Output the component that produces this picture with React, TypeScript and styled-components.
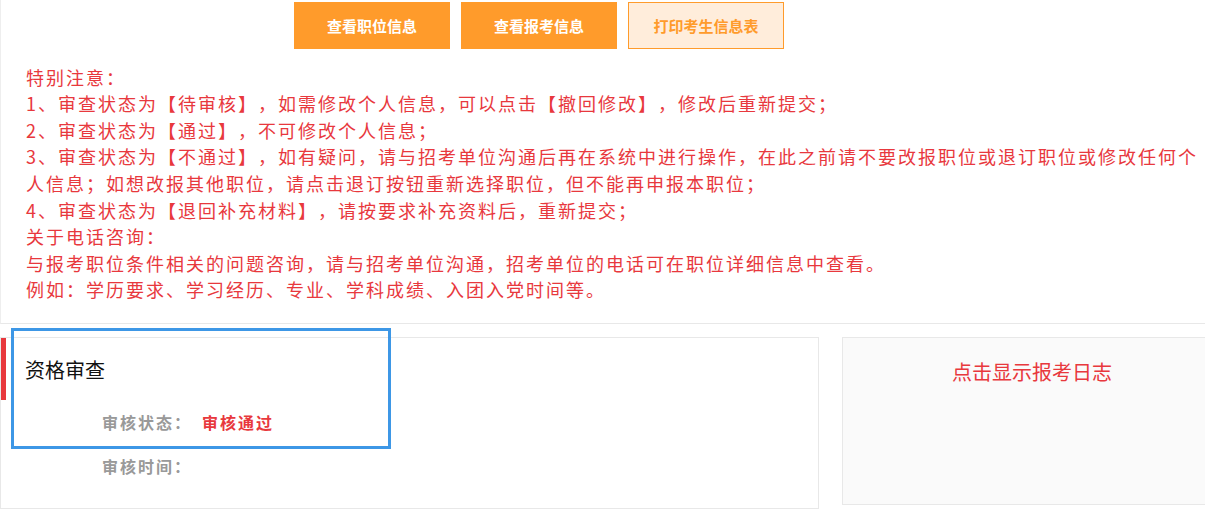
import styled, { createGlobalStyle } from "styled-components";

const GlobalStyle = createGlobalStyle`
  html, body {
    margin: 0;
    padding: 0;
    background: #ffffff;
    overflow: hidden;
  }
  body {
    font-family: "Noto Sans CJK SC", "Liberation Sans", sans-serif;
    text-spacing-trim: space-all;
    font-feature-settings: "palt" 0, "halt" 0;
  }
`;

const RED = "#e8383d";
const ORANGE = "#ff9b2b";
const LINE = "#e8e8e8";

const TopSection = styled.section`
  border-left: 1px solid #eeeeee;
  border-bottom: 1px solid ${LINE};
  padding-bottom: 20px;
`;

const ButtonBar = styled.div`
  display: flex;
  gap: 11px;
  padding: 2px 0 0 293px;
`;

const ActionButton = styled.button<{ $outline?: boolean }>`
  width: 156px;
  height: 47px;
  box-sizing: border-box;
  border: 1px solid ${ORANGE};
  background: ${(p) => (p.$outline ? "#ffeddb" : ORANGE)};
  color: ${(p) => (p.$outline ? ORANGE : "#ffffff")};
  font-family: inherit;
  font-size: 15px;
  font-weight: 700;
  cursor: pointer;
  padding: 0;
`;

const Notes = styled.div`
  margin-top: 14.7px;
  padding-left: 25px;
  color: ${RED};
  font-size: 18px;
  letter-spacing: 2px;
  line-height: 26.6px;
`;

const NoteLine = styled.div``;

const LowerSection = styled.section`
  position: relative;
  display: flex;
  gap: 23px;
  padding-top: 13px;
`;

const ReviewPanel = styled.div`
  width: 819px;
  height: 172px;
  box-sizing: border-box;
  border: 1px solid ${LINE};
  flex-shrink: 0;
`;

const PanelHeader = styled.div`
  height: 62px;
  display: flex;
  align-items: center;
  border-left: 5px solid ${RED};
  padding-left: 19px;
  font-size: 20px;
  color: #111111;
`;

const InfoRow = styled.div`
  display: flex;
  align-items: center;
  height: 44px;
  padding-left: 101px;
  font-size: 16px;
  font-weight: 700;
  letter-spacing: 2px;
`;

const InfoLabel = styled.span`
  width: 100px;
  color: #999999;
`;

const InfoValue = styled.span<{ $tone?: "red" }>`
  color: ${(p) => (p.$tone === "red" ? RED : "#333333")};
`;

const LogPanel = styled.div`
  width: 380px;
  height: 168px;
  box-sizing: border-box;
  flex-shrink: 0;
  border: 1px solid ${LINE};
  background: #fafafa;
  padding-top: 21px;
  text-align: center;
  color: ${RED};
  font-size: 20px;
  line-height: 26px;
  cursor: pointer;
`;

const FocusFrame = styled.div`
  position: absolute;
  left: 11px;
  top: 4px;
  width: 380px;
  height: 121px;
  box-sizing: border-box;
  border: 3px solid #3d97e6;
  pointer-events: none;
`;

const notes = [
  "特别注意：",
  "1、审查状态为【待审核】，如需修改个人信息，可以点击【撤回修改】，修改后重新提交；",
  "2、审查状态为【通过】，不可修改个人信息；",
  "3、审查状态为【不通过】，如有疑问，请与招考单位沟通后再在系统中进行操作，在此之前请不要改报职位或退订职位或修改任何个人信息；如想改报其他职位，请点击退订按钮重新选择职位，但不能再申报本职位；",
  "4、审查状态为【退回补充材料】，请按要求补充资料后，重新提交；",
  "关于电话咨询：",
  "与报考职位条件相关的问题咨询，请与招考单位沟通，招考单位的电话可在职位详细信息中查看。",
  "例如：学历要求、学习经历、专业、学科成绩、入团入党时间等。",
];

const App = () => {
  return (
    <>
      <GlobalStyle />
      <TopSection>
        <ButtonBar>
          <ActionButton>查看职位信息</ActionButton>
          <ActionButton>查看报考信息</ActionButton>
          <ActionButton $outline>打印考生信息表</ActionButton>
        </ButtonBar>
        <Notes>
          {notes.map((line) => (
            <NoteLine key={line}>{line}</NoteLine>
          ))}
        </Notes>
      </TopSection>
      <LowerSection>
        <ReviewPanel>
          <PanelHeader>资格审查</PanelHeader>
          <InfoRow>
            <InfoLabel>审核状态：</InfoLabel>
            <InfoValue $tone="red">审核通过</InfoValue>
          </InfoRow>
          <InfoRow>
            <InfoLabel>审核时间：</InfoLabel>
            <InfoValue></InfoValue>
          </InfoRow>
        </ReviewPanel>
        <LogPanel>点击显示报考日志</LogPanel>
        <FocusFrame />
      </LowerSection>
    </>
  );
};

export default App;
